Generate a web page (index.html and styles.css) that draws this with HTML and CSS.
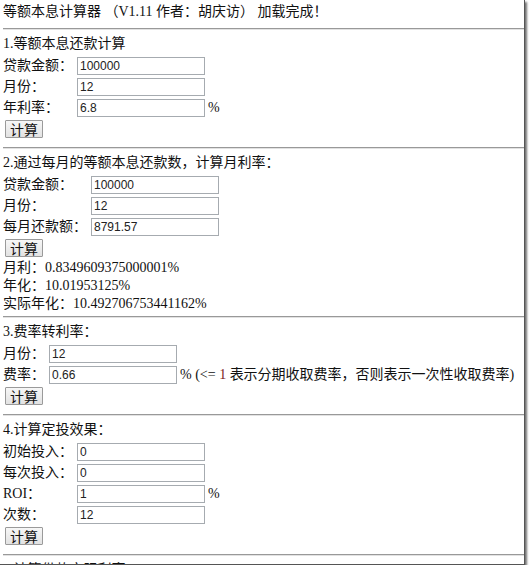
FILE: index.html
```html
<!DOCTYPE html>
<html lang="zh-CN">

<head>
    <meta charset="UTF-8">
    <title>等额本息计算器</title>
    <link rel="stylesheet" href="styles.css">
</head>

<body>
    <div class="frame">
        <div class="page">
            <p class="title">等额本息计算器 （V1.11 作者：胡庆访） 加载完成！</p>
            <hr>

            <!-- 1. 等额本息还款 -->
            <section class="calc">
                <h4>1.等额本息还款计算</h4>
                <div class="fields">
                    <label>贷款金额：</label><input type="text" value="100000"><span></span>
                    <label>月份：</label><input type="text" value="12"><span></span>
                    <label>年利率：</label><input type="text" value="6.8"><span class="unit">%</span>
                </div>
                <button type="button">计算</button>
            </section>
            <hr>

            <!-- 2. 反推月利率 -->
            <section class="calc has-result">
                <h4>2.通过每月的等额本息还款数，计算月利率：</h4>
                <div class="fields">
                    <label>贷款金额：</label><input type="text" value="100000"><span></span>
                    <label>月份：</label><input type="text" value="12"><span></span>
                    <label>每月还款额：</label><input type="text" value="8791.57"><span></span>
                </div>
                <button type="button">计算</button>
                <div class="result">
                    <p>月利：0.8349609375000001%</p>
                    <p>年化：10.01953125%</p>
                    <p>实际年化：10.492706753441162%</p>
                </div>
            </section>
            <hr>

            <!-- 3. 费率转利率 -->
            <section class="calc">
                <h4>3.费率转利率：</h4>
                <div class="fields">
                    <label>月份：</label><input type="text" value="12"><span></span>
                    <label>费率：</label><input type="text" value="0.66"><span class="unit">% (&lt;= <em>1</em> 表示分期收取费率，否则表示一次性收取费率)</span>
                </div>
                <button type="button">计算</button>
            </section>
            <hr>

            <!-- 4. 定投 -->
            <section class="calc">
                <h4>4.计算定投效果：</h4>
                <div class="fields">
                    <label>初始投入：</label><input type="text" value="0"><span></span>
                    <label>每次投入：</label><input type="text" value="0"><span></span>
                    <label>ROI：</label><input type="text" value="1"><span class="unit">%</span>
                    <label>次数：</label><input type="text" value="12"><span></span>
                </div>
                <button type="button">计算</button>
            </section>
            <hr>

            <section class="calc">
                <h4>5.计算借款实际利率：</h4>
            </section>
        </div>
    </div>
</body>

</html>
```

FILE: styles.css
```css
html,
body {
    margin: 0;
    padding: 0;
    background: #fff;
}

body {
    font-family: "Liberation Serif", "Noto Sans CJK SC", serif;
    font-size: 14px;
    line-height: 18px;
    color: #111;
}

p,
h4 {
    margin: 0;
}

/* 截图外框 */
.frame {
    width: 524px;
    height: 564px;
    overflow: hidden;
    border-right: 1px solid #555;
    border-bottom: 1px solid #555;
    box-shadow: 2px 2px 2px rgba(0, 0, 0, 0.55);
}

.page {
    padding: 3px 0 0 3px;
}

hr {
    height: 0;
    margin: 0 0 5px;
    border: none;
    border-top: 1px solid #999;
    border-bottom: 1px solid #e2e2e2;
}

.title {
    margin-bottom: 7px;
}

.calc {
    padding-bottom: 9px;
}

.calc.has-result {
    padding-bottom: 3px;
}

.calc h4 {
    font-weight: normal;
    margin-bottom: 4px;
}

/* 输入行 */
.fields {
    display: grid;
    grid-template-columns: max-content max-content 1fr;
    column-gap: 3px;
    row-gap: 3px;
    align-items: center;
}

.fields label {
    padding-right: 1px;
}

.fields input {
    box-sizing: border-box;
    width: 128px;
    height: 18px;
    margin: 0;
    padding: 0 2px;
    border: 1px solid #a6abb0;
    font-family: "Liberation Sans", sans-serif;
    font-size: 12px;
    color: #222;
}

.unit {
    white-space: nowrap;
}

.unit em {
    font-style: normal;
    color: #7a1c1c;
}

button {
    display: block;
    box-sizing: border-box;
    height: 18px;
    margin: 3px 0 0 2px;
    padding: 0 4px;
    border: 1px solid #9a9a9a;
    border-radius: 1px;
    background: linear-gradient(#f7f7f7, #e2e2e2);
    font-family: "Noto Sans CJK SC", sans-serif;
    font-size: 14px;
    line-height: 16px;
    color: #111;
}

.result {
    margin-top: 2px;
}
```
